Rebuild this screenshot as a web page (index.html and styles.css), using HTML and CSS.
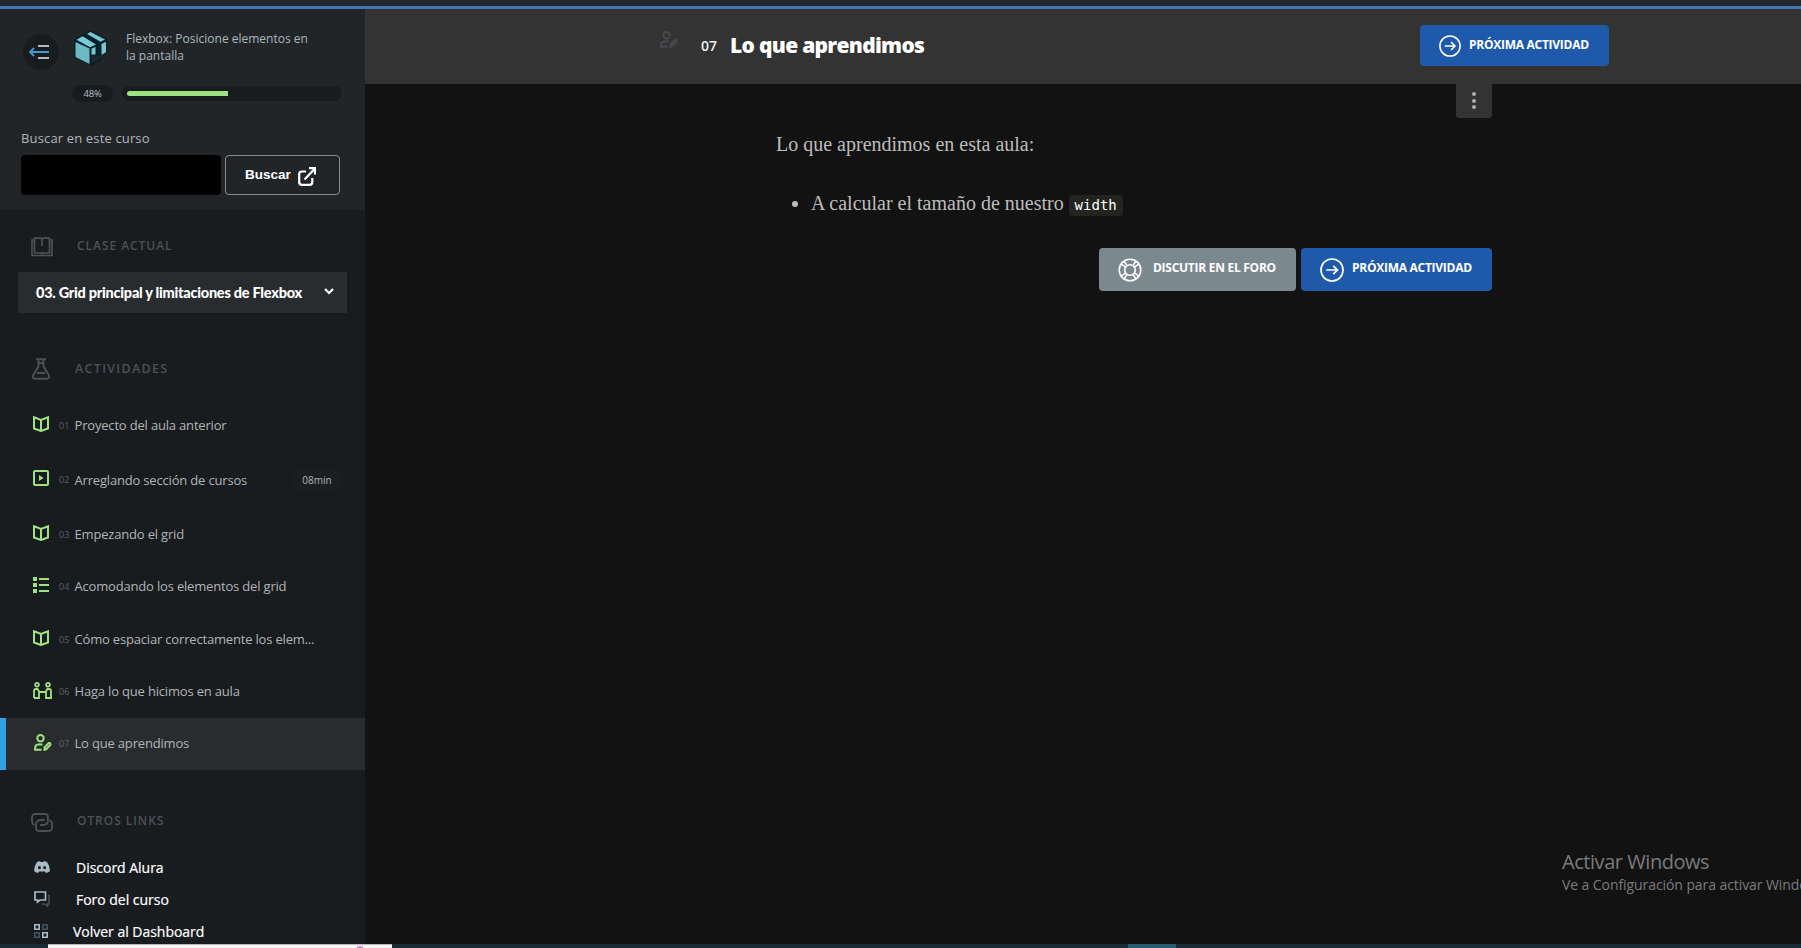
FILE: index.html
```html
<!DOCTYPE html>
<html lang="es">
<head>
<meta charset="utf-8">
<title>Lo que aprendimos</title>
<link rel="stylesheet" href="styles.css">
</head>
<body>
<svg class="defs" width="0" height="0">
  <symbol id="book" viewBox="0 0 16 16"><path d="M1 1.3 8 4l7-2.7v11.2L8 15l-7-2.5zM8 4v11" fill="none" stroke="currentColor" stroke-width="2"/></symbol>
  <symbol id="video" viewBox="0 0 16 16"><rect x="1" y="1" width="14" height="14" rx="1" fill="none" stroke="currentColor" stroke-width="2"/><path d="M6 5v6l4.5-3z" fill="currentColor"/></symbol>
  <symbol id="list" viewBox="0 0 16 16"><path d="M0 0h4v4H0zM0 6h4v4H0zM0 12h4v4H0zM6 1h10v2H6zM6 7h10v2H6zM6 13h10v2H6z" fill="currentColor"/></symbol>
  <symbol id="people" viewBox="0 0 19 17"><g fill="none" stroke="currentColor" stroke-width="1.8"><circle cx="4" cy="2.800" r="1.900"/><circle cx="15" cy="2.800" r="1.900"/><path d="M1 16V9q0-2 2-2h1.500l2 3h6l2-3H16q2 0 2 2v7h-5v-3.500M1 16h5v-3.500M6 10v2.500M13 10v2.500"/></g></symbol>
  <symbol id="useredit" viewBox="0 0 19 17"><g fill="none" stroke="currentColor" stroke-width="2"><circle cx="7.500" cy="4.200" r="3.200"/><path d="M9.500 10.500H5Q2 10.500 2 15.800h6.500M11.500 15.800v-2.500l4.300-4.300q1.800-.3 1.800 1.700l-4.500 4.600z"/></g></symbol>
  <symbol id="next" viewBox="0 0 24 24"><g fill="none" stroke="currentColor" stroke-width="1.700"><circle cx="12" cy="12" r="11"/><path d="M6.300 12h11M13.200 7.800l4.300 4.200-4.300 4.200"/></g></symbol>
</svg>
<div class="screen">
  <div class="browser-edge"></div>
  <div class="page">
    <aside class="sidebar">
      <div class="course">
        <div class="course-top">
          <button class="collapse" aria-label="Contraer"><svg width="20" height="14" viewBox="0 0 20 14"><path d="M9 1h11M9 13h11" stroke="#b5b8ba" stroke-width="1.800"/><path d="M1 7h19M5 3 1 7l4 4" fill="none" stroke="#3f9dd6" stroke-width="1.800"/></svg></button>
          <svg class="cube" width="36" height="38" viewBox="0 0 36 38">
            <path d="M17.500.5 34.500 9.500V23L29 26.500 17.500 35 1 27.500V9z" fill="#05202b"/>
            <path d="M2.500 12 16.500 18.500V34L2.500 27z" fill="#6bb9c1"/>
            <path d="M3.500 9.800 9.500 6.200 23 14.500 17 17.200z" fill="#79cbd3"/>
            <path d="m14 4 3.500-2L32 9.500l-4.500 2.200zM18.500 18.800l4-2v7.700h-4zM28.500 14l4.500-2.200v10.400L28.500 25z" fill="#79c6ce"/>
            <path d="M18.500 25.500h9.500l6-3V28L18.500 34z" fill="#222528"/>
            <path d="m17.500 35 10.500-6" fill="none" stroke="#05202b" stroke-width="1.800"/>
          </svg>
          <p class="course-name">Flexbox: Posicione elementos en<br>la pantalla</p>
        </div>
        <div class="progress"><span class="pct">48%</span><div class="track"><div class="fill" style="width:48.300%"></div></div></div>
        <label class="search-label">Buscar en este curso</label>
        <div class="search"><div class="input"></div><button class="search-btn">Buscar<svg width="18" height="19" viewBox="0 0 18 19"><path d="M8 4.500H4Q1.200 4.500 1.200 7v8q0 2.800 2.800 2.800h7.500q2.800 0 2.800-2.800V11M6.500 12.500 16.500 2M11 1.200h6V7.500" fill="none" stroke="#fff" stroke-width="2.200"/></svg></button></div>
      </div>
      <div class="section s-class"><svg width="22" height="20" viewBox="0 0 22 20"><g fill="none" stroke="currentColor" stroke-width="1.700"><path d="M3.500 3H1v15.500h20V3h-2.500M11 16H3.500V1.200H9q2 0 2 1.500 0-1.500 2-1.500h5.500V16H11v1.500M11 2.500V9"/></g></svg><span class="t-class">CLASE ACTUAL</span></div>
      <div class="select"><span>03. Grid principal y limitaciones de Flexbox</span><svg width="10" height="7" viewBox="0 0 10 7"><path d="m1 1 4 4 4-4" fill="none" stroke="#fff" stroke-width="2.200"/></svg></div>
      <div class="section s-act"><svg width="18" height="22" viewBox="0 0 18 22"><path d="M4 1.200h10M6.500 1v7.500L1.300 17q-1.300 3.500 2 3.700h11.400q3.300-.2 2-3.700L11.500 8.500V1M6.500 5h5M5 15h8" fill="none" stroke="currentColor" stroke-width="1.900"/></svg><span class="t-act">ACTIVIDADES</span></div>
      <ul class="items">
        <li class="h53"><i><svg width="16" height="16"><use href="#book"/></svg></i><em>01</em><span>Proyecto del aula anterior</span></li>
        <li class="h56"><i><svg width="16" height="16"><use href="#video"/></svg></i><em>02</em><span>Arreglando sección de cursos</span><b>08min</b></li>
        <li class="h53"><i><svg width="16" height="16"><use href="#book"/></svg></i><em>03</em><span>Empezando el grid</span></li>
        <li><i><svg width="16" height="16"><use href="#list"/></svg></i><em>04</em><span>Acomodando los elementos del grid</span></li>
        <li class="h53"><i><svg width="16" height="16"><use href="#book"/></svg></i><em>05</em><span>Cómo espaciar correctamente los elem...</span></li>
        <li><i><svg width="19" height="17"><use href="#people"/></svg></i><em>06</em><span>Haga lo que hicimos en aula</span></li>
        <li class="active"><i><svg width="19" height="17"><use href="#useredit"/></svg></i><em>07</em><span>Lo que aprendimos</span></li>
      </ul>
      <div class="section s-links"><svg width="22" height="19" viewBox="0 0 22 19"><path d="M3.500 12Q1 11 1 8V4.500Q1 1 4.500 1h9Q17 1 17 4v3q0 5-5 5H9M18.500 7Q21 8 21 11v3.500q0 3.500-3.500 3.500h-9Q5 18 5 15v-3q0-5 5-5h3.500" fill="none" stroke="currentColor" stroke-width="1.800"/></svg><span class="t-links">OTROS LINKS</span></div>
      <nav class="links">
        <a><svg width="16" height="12" viewBox="0 0 16 12"><path fill="#a9bcc6" fill-rule="evenodd" d="M3 1 6 0l.6 1h2.800L10 0l3 1q3 4 3 9-1.500 1.500-4 2l-1-1.500H5L4 12q-2.500-.5-4-2Q0 5 3 1zm2.400 4A1.500 1.600 0 1 0 5.500 8.200 1.500 1.600 0 0 0 5.400 5zm5.200 0a1.500 1.600 0 1 0 .1 3.200A1.500 1.600 0 0 0 10.600 5z"/></svg><span>Discord Alura</span></a>
        <a><svg width="16" height="16" viewBox="0 0 16 16"><path d="M14 4.500h1V13h-1.500v2L10.500 13H8" fill="none" stroke="#46515a" stroke-width="1.500"/><path d="M1 1h10.500v8H6l-2.500 2V9H1z" fill="none" stroke="#a9bcc6" stroke-width="1.700"/></svg><span>Foro del curso</span></a>
        <a class="dash"><svg width="14" height="14" viewBox="0 0 14 14"><g fill="none" stroke-width="1.600"><path d="M.8.800h4.400v4.400H.8zM8.800 8.800h4.400v4.400H8.800z" stroke="#a9bcc6"/><path d="M8.800.800h4.400v4.400H8.800zM.8 8.800h4.400v4.400H.8z" stroke="#46515a"/></g></svg><span>Volver al Dashboard</span></a>
      </nav>
    </aside>
    <main class="main">
      <header class="topbar">
        <svg class="head-icon" width="19" height="17"><use href="#useredit"/></svg>
        <span class="num">07</span><h1>Lo que aprendimos</h1>
        <button class="btn head-btn"><svg width="22" height="22"><use href="#next"/></svg><span>PRÓXIMA ACTIVIDAD</span></button>
      </header>
      <div class="content">
        <button class="kebab" aria-label="Opciones"><s></s><s></s><s></s></button>
        <p class="lead">Lo que aprendimos en esta aula:</p>
        <ul class="learned"><li><span>A calcular el tamaño de nuestro</span><code>width</code></li></ul>
        <div class="actions">
          <button class="btn forum"><svg width="24" height="24" viewBox="0 0 24 24"><g fill="none" stroke="#fff" stroke-width="1.600"><circle cx="12" cy="12" r="10.800"/><circle cx="12" cy="12" r="5.300"/><path d="m3.200 6.200 4.200 2.700M6.200 3.200l2.700 4.200M20.800 6.200l-4.200 2.700M17.800 3.200l-2.700 4.200M3.200 17.800l4.200-2.700M6.200 20.800l2.700-4.200M20.800 17.800l-4.200-2.700M17.800 20.800l-2.700-4.200"/></g></svg><span>DISCUTIR EN EL FORO</span></button>
          <button class="btn next"><svg width="24" height="24"><use href="#next"/></svg><span>PRÓXIMA ACTIVIDAD</span></button>
        </div>
      </div>
    </main>
  </div>
  <div class="taskbar"><div class="preview"><u></u></div><div class="running"></div></div>
  <div class="watermark"><div class="w1">Activar Windows</div><div class="w2">Ve a Configuración para activar Windows.</div></div>
</div>
</body>
</html>
```
FILE: styles.css
```css
* { box-sizing: border-box; margin: 0; padding: 0; }
body { background: #121212; font-family: "Open Sans", sans-serif; }
button { font: inherit; border: 0; color: #fff; }
.defs { display: block; height: 0; }
.screen { position: relative; width: 1801px; height: 948px; overflow: hidden; display: flex; flex-direction: column; }
.browser-edge { height: 9px; flex: none; background: #25282d; border-bottom: 3px solid #4474b6; }
.page { height: 935px; flex: none; display: flex; overflow: hidden; }

.sidebar { width: 365px; flex: none; background: #191c1f; color: #b4b7ba; }
.course { height: 201px; background: #222528; padding: 20px 0 0 21px; }
.course-top { display: flex; height: 56px; }
.collapse { width: 36px; height: 36px; margin: 5px 0 0 2px; border-radius: 50%; background: #191c1e; display: flex; align-items: center; justify-content: center; padding-right: 4px; }
.cube { margin: 1px 0 0 14px; }
.course-name { margin: 1px 0 0 17px; font-size: 12px; line-height: 17px; color: #a9b7bf; white-space: nowrap; }
.progress { display: flex; align-items: center; gap: 9px; margin-left: 51px; height: 17px; }
.pct { width: 41px; height: 17px; border-radius: 9px; background: #191c1e; font-size: 9.500px; line-height: 17px; text-align: center; color: #b4c0c6; letter-spacing: -.2px; }
.track { width: 220px; height: 15px; border-radius: 8px; background: #191c1e; padding: 5px; }
.fill { height: 5px; background: #9ee381; border-radius: 3px 0 0 3px; }
.search-label { display: block; margin-top: 27px; height: 26px; font-size: 13px; line-height: 18px; color: #b1b5b8; letter-spacing: .15px; }
.search { display: flex; gap: 4px; }
.input { width: 200px; height: 40px; background: #000; border-radius: 4px; }
.search-btn { width: 115px; height: 40px; border: 1px solid #8b8e91; border-radius: 4px; background: transparent; display: flex; align-items: center; padding-left: 19px; font: bold 13.500px/18px "Liberation Sans", sans-serif; gap: 7px; }
.search-btn svg { margin-top: 3px; }

.section { display: flex; color: #4b5155; font-weight: 600; font-size: 12px; line-height: 18px; letter-spacing: .95px; }
.s-class { padding: 27px 0 0 31px; height: 62px; }
.t-class { margin: 0 0 0 24px; }
.select { margin-left: 18px; width: 329px; height: 41px; background: #292c2f; display: flex; align-items: center; justify-content: space-between; padding: 0 13px 0 18px; font: 900 14.500px/20px Lato, sans-serif; color: #fff; letter-spacing: -.25px; }
.select svg { margin-top: -2px; }
.s-act { padding: 45px 0 0 32px; height: 86px; }
.t-act { margin: 2px 0 0 25px; font-size: 12.500px; letter-spacing: 1.300px; }
.items { list-style: none; }
.items li { height: 52px; display: flex; align-items: center; padding-left: 33px; font-size: 13px; letter-spacing: -.18px; color: #b1b4b6; }
.items li.h53 { height: 53px; }
.items li.h56 { height: 56px; }
.items i { width: 26px; color: #9ee381; display: flex; margin-top: -4px; }
.items em { font-style: normal; width: 15.500px; font-size: 9px; color: #5a6064; letter-spacing: 0; margin-top: -1px; }
.items span { margin-top: -2px; }
.items .h56 span { margin-top: 0; }
.items b { margin-left: auto; margin-right: 24px; width: 48px; height: 24px; background: #1b1e20; border-radius: 4px; font-weight: 400; font-size: 10px; line-height: 24px; text-align: center; letter-spacing: 0; }
.items li.active { border-left: 6px solid #2ea3e3; background: #292c2f; padding-left: 27px; }
.items li.active i { margin-top: -3px; }
.s-links { padding: 43px 0 0 31px; height: 80px; }
.t-links { margin: -1px 0 0 24px; }
.links a { display: flex; align-items: center; height: 32px; padding-left: 34px; color: #fff; font-size: 14px; letter-spacing: -.02px; }
.links { margin-top: 1px; }
.links span { margin-left: 26px; -webkit-text-stroke: .2px #fff; }
.links a.dash span { margin-left: 25px; }

.main { flex: 1; background: #121212; }
.topbar { height: 75px; background: #333; display: flex; padding-left: 294px; }
.head-icon { margin-top: 22px; color: #474b4f; }
.num { margin: 27px 0 0 23px; width: 29px; font-size: 14px; line-height: 20px; font-weight: 600; color: #eee; }
h1 { margin-top: 23px; width: 690px; font-size: 21px; line-height: 26px; font-weight: 800; color: #fff; letter-spacing: -.7px; }
.btn { background: #1f5aaa; border-radius: 4px; display: flex; align-items: center; color: #fff; font-size: 12px; font-weight: 700; letter-spacing: -.27px; white-space: nowrap; }
.head-btn { width: 189px; height: 41px; margin-top: 16px; padding-left: 19px; gap: 8px; }
.btn span { margin-top: -2px; }
.content { padding: 0 309px 0 411px; }
.kebab { display: flex; flex-direction: column; align-items: center; gap: 2.500px; width: 36px; height: 34px; margin-left: auto; background: #333; border-radius: 0 0 3px 3px; padding-top: 8px; }
.kebab s { width: 4px; height: 4px; border-radius: 50%; background: #a3b0b8; }
.lead, .learned { font-family: "Liberation Serif", serif; font-size: 20px; line-height: 24px; color: #bdbdbd; white-space: nowrap; }
.lead { margin-top: 14px; }
.learned { margin-top: 35px; padding-left: 35px; height: 57px; }
.learned li { height: 24px; }
code { display: inline-block; margin-left: 5px; width: 54px; height: 21px; background: #23241f; border-radius: 3px; color: #fff; font: 14px/21px "DejaVu Sans Mono", monospace; text-align: center; }
.actions { display: flex; justify-content: flex-end; gap: 5px; }
.actions .btn { height: 43px; }
.actions .btn span { margin-top: -4px; }
.forum { width: 197px; background: #7b898f; padding-left: 19px; gap: 11px; }
.next { width: 191px; padding-left: 19px; gap: 8px; }

.taskbar { height: 4px; flex: none; display: flex; background: #172c35; padding-left: 48px; }
.preview { width: 344px; background: #f4f4f4; border-top: 1px solid #b9b9b9; }
.preview u { display: block; width: 6px; height: 2px; margin: 1px 0 0 309px; background: #d59be0; }
.running { width: 48px; margin-left: 736px; background: #265b70; }
.watermark { position: absolute; left: 1562px; top: 849px; color: #7b7b7b; font-family: "Open Sans", sans-serif; white-space: nowrap; }
.w1 { font-size: 20px; line-height: 26px; letter-spacing: -.45px; }
.w2 { font-size: 14px; line-height: 20px; letter-spacing: -.08px; }
```
